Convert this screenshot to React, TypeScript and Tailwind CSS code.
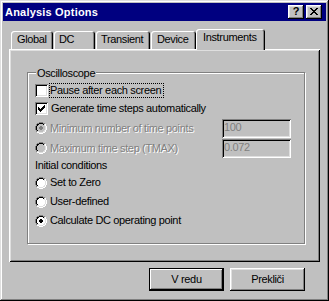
import React from "react";

const FONT = "font-['Liberation_Sans',Arial,sans-serif]";
const BTN =
  "shadow-[inset_-1px_-1px_0_#000,inset_1px_1px_0_#fff,inset_-2px_-2px_0_#808080,inset_2px_2px_0_#dfdfdf]";
const DIS = "text-[#808080] [text-shadow:1px_1px_0_#fff]";

function PixelArt({ pattern, colors }: { pattern: string[]; colors: Record<string, string> }) {
  const w = pattern[0].length;
  const h = pattern.length;
  const rects: React.ReactNode[] = [];
  pattern.forEach((row, y) =>
    row.split("").forEach((c, x) => {
      if (colors[c]) rects.push(<rect key={`${x}-${y}`} x={x} y={y} width={1} height={1} fill={colors[c]} />);
    })
  );
  return (
    <svg width={w} height={h} viewBox={`0 0 ${w} ${h}`} shapeRendering="crispEdges" className="block">
      {rects}
    </svg>
  );
}

const X_GLYPH = [
  "XX....XX",
  ".XX..XX.",
  "..XXXX..",
  "...XX...",
  "..XXXX..",
  ".XX..XX.",
  "XX....XX",
];

const CHECK = [
  "......X",
  ".....XX",
  "X...XXX",
  "XX.XXX.",
  "XXXXX..",
  ".XXX...",
  "..X....",
];

function radioPattern(checked: boolean): string[] {
  const outer: Record<number, number[]> = {
    0: [4, 5, 6, 7],
    1: [2, 3, 8, 9],
    2: [1, 10],
    3: [1, 10],
    4: [0, 11],
    5: [0, 11],
    6: [0, 11],
    7: [0, 11],
    8: [1, 10],
    9: [1, 10],
    10: [2, 3, 8, 9],
    11: [4, 5, 6, 7],
  };
  const inner: Record<number, number[]> = {
    1: [4, 5, 6, 7],
    2: [2, 3, 8, 9],
    3: [2, 9],
    4: [1, 10],
    5: [1, 10],
    6: [1, 10],
    7: [1, 10],
    8: [2, 9],
    9: [2, 3, 8, 9],
    10: [4, 5, 6, 7],
  };
  const fill: Record<number, [number, number]> = {
    2: [4, 7],
    3: [3, 8],
    4: [2, 9],
    5: [2, 9],
    6: [2, 9],
    7: [2, 9],
    8: [3, 8],
    9: [4, 7],
  };
  const dot: Record<number, number[]> = {
    4: [5, 6],
    5: [4, 5, 6, 7],
    6: [4, 5, 6, 7],
    7: [5, 6],
  };
  const rows: string[] = [];
  for (let y = 0; y < 12; y++) {
    let s = "";
    for (let x = 0; x < 12; x++) {
      let c = ".";
      if (outer[y]?.includes(x)) c = x + y <= 10 ? "D" : "W";
      else if (inner[y]?.includes(x)) c = x + y <= 10 ? "K" : "L";
      else if (fill[y] && x >= fill[y][0] && x <= fill[y][1]) c = "F";
      if (checked && dot[y]?.includes(x)) c = "O";
      s += c;
    }
    rows.push(s);
  }
  return rows;
}

function Radio({ checked, disabled }: { checked?: boolean; disabled?: boolean }) {
  return (
    <div className="w-[12px] h-[12px] shrink-0">
      <PixelArt
        pattern={radioPattern(!!checked)}
        colors={{
          D: "#808080",
          W: "#ffffff",
          K: "#000000",
          L: "#dfdfdf",
          F: disabled ? "#c0c0c0" : "#ffffff",
          O: disabled ? "#808080" : "#000000",
        }}
      />
    </div>
  );
}

function Checkbox({ checked }: { checked?: boolean }) {
  return (
    <div className="w-[13px] h-[13px] shrink-0 bg-white shadow-[inset_1px_1px_0_#808080,inset_-1px_-1px_0_#fff,inset_2px_2px_0_#000,inset_-2px_-2px_0_#dfdfdf] pl-[3px] pt-[3px]">
      {checked && <PixelArt pattern={CHECK} colors={{ X: "#000" }} />}
    </div>
  );
}

function Field({ value }: { value: string }) {
  return (
    <div className="ml-auto self-start mt-[1px] w-[69px] h-[19px] shrink-0 bg-[#c0c0c0] shadow-[inset_1px_1px_0_#808080,inset_-1px_-1px_0_#fff,inset_2px_2px_0_#000,inset_-2px_-2px_0_#dfdfdf] pl-[2px] pt-[2px] text-[#808080]">
      {value}
    </div>
  );
}

function Tab({ label, width, pl, selected }: { label: string; width: string; pl: string; selected?: boolean }) {
  const base =
    "bg-[#c0c0c0] rounded-t-[3px] shadow-[inset_1px_1px_0_#fff,inset_-1px_0_0_#000,inset_-2px_0_0_#808080] pt-[2px] whitespace-nowrap";
  return selected ? (
    <div className={`${base} ${width} ${pl} h-[21px] -mb-px relative z-10`}>{label}</div>
  ) : (
    <div className={`${base} ${width} ${pl} h-[18px] ml-[1px] first:ml-0`}>{label}</div>
  );
}

export default function App() {
  return (
    <div
      className={`w-[329px] h-[301px] bg-[#c0c0c0] p-[3px] flex flex-col ${FONT} text-[11px] leading-[13px] tracking-[-0.35px] text-black shadow-[inset_-1px_-1px_0_#000,inset_1px_1px_0_#dfdfdf,inset_-2px_-2px_0_#808080,inset_2px_2px_0_#fff]`}
    >
      {/* Title bar */}
      <div className="h-[18px] shrink-0 bg-[#000080] flex items-center pl-[2px] pr-[4px]">
        <span className="flex-1 font-bold text-white tracking-[0.2px]">Analysis Options</span>
        <div className={`w-[16px] h-[14px] bg-[#c0c0c0] ${BTN} flex items-center justify-center font-bold text-[11px] leading-[11px] tracking-normal pb-[1px]`}>
          ?
        </div>
        <div className={`ml-[2px] w-[16px] h-[14px] bg-[#c0c0c0] ${BTN} pl-[4px] pt-[3px]`}>
          <PixelArt pattern={X_GLYPH} colors={{ X: "#000" }} />
        </div>
      </div>

      {/* Tabs */}
      <div className="mt-[8px] h-[20px] shrink-0 flex items-end pl-[8px]">
        <Tab label="Global" width="w-[42px]" pl="pl-[6px]" />
        <Tab label="DC" width="w-[41px]" pl="pl-[5px]" />
        <Tab label="Transient" width="w-[54px]" pl="pl-[5px]" />
        <Tab label="Device" width="w-[45px]" pl="pl-[6px]" />
        <Tab label="Instruments" width="w-[69px]" pl="pl-[7px]" selected />
      </div>

      {/* Panel */}
      <div className="ml-[6px] w-[311px] h-[213px] shrink-0 shadow-[inset_1px_1px_0_#fff,inset_-1px_-1px_0_#000,inset_2px_2px_0_#dfdfdf,inset_-2px_-2px_0_#808080] pt-[23px] pl-[18px]">
        <div className="relative w-[278px] h-[172px] border border-[#808080] shadow-[inset_1px_1px_0_#fff,1px_1px_0_#fff] pt-[8px] pl-[7px] pr-[13px] flex flex-col">
          <span className="absolute left-[8px] top-[-6px] px-[1px] bg-[#c0c0c0]">Oscilloscope</span>

          <div className="h-[18px] flex items-center">
            <Checkbox />
            <span className="ml-[1px] border border-dotted border-black pr-[2px]">Pause after each screen</span>
          </div>
          <div className="h-[19px] flex items-center">
            <Checkbox checked />
            <span className="ml-[3px]">Generate time steps automatically</span>
          </div>
          <div className="h-[20px] flex items-center">
            <Radio checked disabled />
            <span className={`ml-[3px] ${DIS}`}>Minimum number of time points</span>
            <Field value="100" />
          </div>
          <div className="h-[20px] flex items-center">
            <Radio disabled />
            <span className={`ml-[3px] ${DIS}`}>Maximum time step (TMAX)</span>
            <Field value="0.072" />
          </div>
          <div className="h-[15px] flex items-center">
            <span>Initial conditions</span>
          </div>
          <div className="h-[19px] flex items-center">
            <Radio />
            <span className="ml-[3px]">Set to Zero</span>
          </div>
          <div className="h-[19px] flex items-center">
            <Radio />
            <span className="ml-[3px]">User-defined</span>
          </div>
          <div className="h-[19px] flex items-center">
            <Radio checked />
            <span className="ml-[3px]">Calculate DC operating point</span>
          </div>
        </div>
      </div>

      {/* Buttons */}
      <div className="mt-[6px] flex justify-end pr-[21px] gap-[6px]">
        <div className="w-[75px] h-[23px] flex items-center justify-center shadow-[inset_-2px_-2px_0_#000,inset_1px_1px_0_#000,inset_2px_2px_0_#fff,inset_-3px_-3px_0_#808080]">
          V redu
        </div>
        <div className={`w-[75px] h-[23px] flex items-center justify-center ${BTN}`}>Prekliči</div>
      </div>
    </div>
  );
}
